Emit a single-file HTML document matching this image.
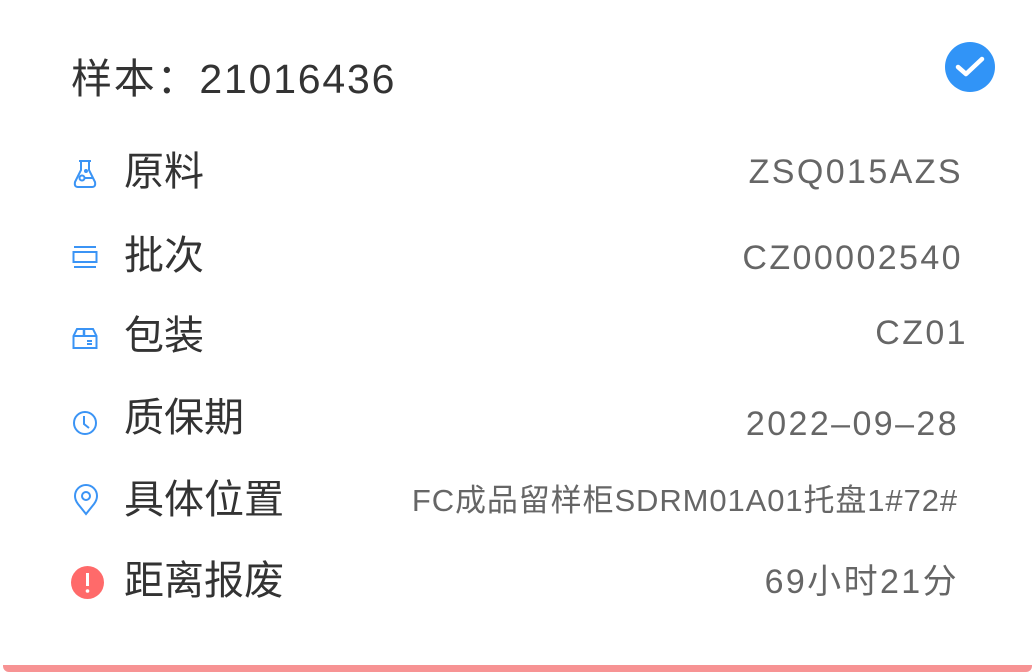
<!DOCTYPE html>
<html><head><meta charset="utf-8"><style>
body{margin:0;width:1035px;height:672px;background:#fff;position:relative;overflow:hidden;font-family:"Liberation Sans","Noto Sans CJK SC",sans-serif}
.bar{position:absolute;left:3px;right:3px;bottom:0;height:7px;background:#f79394;border-radius:0 0 6px 6px}
.t{position:absolute;left:71px;top:55px;font-size:41px;color:#333;line-height:48px;letter-spacing:1.8px}
.l{position:absolute;left:124px;font-size:40px;color:#333;line-height:46px}
.v{position:absolute;font-size:34px;color:#666;line-height:40px;text-align:right;white-space:nowrap;letter-spacing:2.4px}
svg{position:absolute}
</style></head><body>
<div class="t">样本：21016436</div>
<svg style="left:945px;top:42px" width="50" height="50" viewBox="0 0 50 50"><circle cx="25" cy="25" r="25" fill="#3194f7"/><path d="M13 25 L21 32 L37 17" stroke="#fff" stroke-width="4.5" fill="none" stroke-linecap="round" stroke-linejoin="round"/></svg>

<svg style="left:72px;top:159px" width="26" height="31" viewBox="0 0 26 31" fill="none" stroke="#3b94f5" stroke-width="2"><path d="M9 2V11L3 23Q2 28 6 28H20Q24 28 23 23L17 11V2M7 2H19"/><circle cx="10" cy="19" r="2.5"/><path d="M12.5 19H21"/><circle cx="14" cy="12" r="1" fill="#3b94f5"/></svg>
<div class="l" style="top:149px">原料</div>
<div class="v" style="right:72px;top:152px">ZSQ015AZS</div>

<svg style="left:72px;top:246px" width="26" height="22" viewBox="0 0 26 22" fill="none" stroke="#3b94f5" stroke-width="2"><path d="M2 1H24M2 21H24"/><rect x="1.5" y="6" width="23" height="10"/></svg>
<div class="l" style="top:233px">批次</div>
<div class="v" style="right:72px;top:238px">CZ00002540</div>

<svg style="left:72px;top:326px" width="26" height="24" viewBox="0 0 26 24" fill="none" stroke="#3b94f5" stroke-width="2"><path d="M1.5 10L5 3H21L24.5 10V22H1.5Z M1.5 10H24.5"/><path d="M12 3V10" stroke-width="2.5"/><path d="M15 15H20M15 18H20"/></svg>
<div class="l" style="top:313px">包装</div>
<div class="v" style="right:67px;top:313px">CZ01</div>

<svg style="left:72px;top:410px" width="26" height="26" viewBox="0 0 26 26" fill="none" stroke="#3b94f5" stroke-width="2"><circle cx="13" cy="13" r="11"/><path d="M12 6V14L17 18"/></svg>
<div class="l" style="top:395px">质保期</div>
<div class="v" style="right:76px;top:404px">2022–09–28</div>

<svg style="left:74px;top:484px" width="24" height="32" viewBox="0 0 24 32" fill="none" stroke="#3b94f5" stroke-width="2"><path d="M12 30L4 20Q1 16 1 12A11 11 0 0 1 23 12Q23 16 20 20Z"/><circle cx="12" cy="12" r="4"/></svg>
<div class="l" style="top:477px">具体位置</div>
<div class="v" style="right:77px;top:481px;font-size:31px;letter-spacing:0.9px">FC成品留样柜SDRM01A01托盘1#72#</div>

<svg style="left:71px;top:566px" width="33" height="33" viewBox="0 0 33 33"><circle cx="16.5" cy="16.5" r="16.5" fill="#ff6a6a"/><path d="M16.5 7V20" stroke="#fff" stroke-width="3"/><circle cx="16.5" cy="25" r="1.8" fill="#fff"/></svg>
<div class="l" style="top:558px">距离报废</div>
<div class="v" style="right:76px;top:562px">69小时21分</div>

<div class="bar"></div>
</body></html>
